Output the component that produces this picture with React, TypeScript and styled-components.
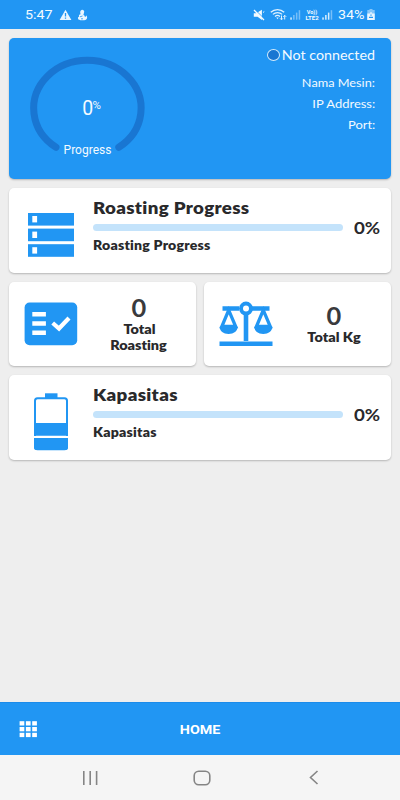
import React from "react";
import styled, { createGlobalStyle } from "styled-components";

const BLUE = "#2196f3";
const INK = "#29292b";

const GlobalStyle = createGlobalStyle`
  *, *::before, *::after { box-sizing: border-box; }
  body { margin: 0; background: #eeeeee; font-family: Lato, "Liberation Sans", sans-serif; }
  svg { display: block; flex: none; }
`;

const Screen = styled.div`
  width: 100%;
  height: 100vh;
  min-height: 800px;
  display: flex;
  flex-direction: column;
  background: #eeeeee;
  overflow: hidden;
`;

const StatusBar = styled.header`
  height: 29px;
  flex: none;
  display: flex;
  justify-content: space-between;
  padding-left: 25px;
  padding-right: 25px;
  background: ${BLUE};
`;

const StatusGroup = styled.div`
  display: flex;
  align-items: center;
  height: 29px;
`;

const Label = styled.span<{
  $size: number;
  $line: number;
  $stretch?: number;
  $weight?: number;
  $color?: string;
  $origin?: "left" | "center" | "right";
  $family?: string;
  $spacing?: number;
}>`
  display: block;
  margin: 0;
  white-space: nowrap;
  font-family: ${(p) => p.$family ?? "Lato"}, "Liberation Sans", sans-serif;
  font-size: ${(p) => p.$size}px;
  line-height: ${(p) => p.$line}px;
  font-weight: ${(p) => p.$weight ?? 400};
  font-variant-ligatures: none;
  letter-spacing: ${(p) => p.$spacing ?? 0}px;
  color: ${(p) => p.$color ?? "#f3faff"};
  transform: scaleX(${(p) => p.$stretch ?? 1});
  transform-origin: ${(p) => p.$origin ?? "left"} center;
`;

const Clock = styled(Label)`
  width: 34px;
`;

const BatteryText = styled(Label)`
  width: 28px;
  margin-left: 5px;
`;

const Content = styled.main`
  flex: 1;
  display: flex;
  flex-direction: column;
  gap: 9px;
  padding: 9px 9px 0;
`;

const Card = styled.section`
  background: #ffffff;
  border-radius: 5px;
  box-shadow: 0 1px 2px rgba(0, 0, 0, 0.24);
`;

const HeroCard = styled(Card)`
  height: 141px;
  flex: none;
  display: flex;
  justify-content: space-between;
  background: ${BLUE};
  padding: 7px 16px 0 17px;
`;

const Gauge = styled.div`
  width: 123px;
  height: 120px;
  display: grid;
  justify-items: center;
  align-items: start;
  > * { grid-area: 1 / 1; }
`;

const GaugeValue = styled.div`
  display: flex;
  align-items: flex-start;
  padding-top: 51px;
  padding-left: 8px;
`;

const GaugeCaption = styled(Label)`
  margin-top: 97px;
`;

const Machine = styled.div`
  display: flex;
  flex-direction: column;
  align-items: flex-end;
`;

const Connection = styled.div`
  display: flex;
  align-items: center;
  justify-content: flex-end;
  height: 20px;
  margin-bottom: 6.5px;
`;

const ConnectionText = styled(Label)`
  width: 92px;
  text-align: right;
`;

const StatusDot = styled.i`
  width: 13px;
  height: 12px;
  margin-right: 3px;
  border: 1.4px solid #d3ebfc;
  border-radius: 50%;
  background: #1976d2;
`;

const MeterCard = styled(Card)`
  height: 84.5px;
  flex: none;
  display: flex;
`;

const MeterIcon = styled.div`
  width: 84px;
  display: flex;
  justify-content: center;
`;

const MeterBody = styled.div`
  width: 250px;
  padding-top: 9px;
`;

const Track = styled.div`
  height: 6.5px;
  margin: 5px 0 6px;
  border-radius: 3.5px;
  background: #c4e3fb;
`;

const MeterPercent = styled(Label)`
  margin: 30px 0 0 11px;
`;

const TileRow = styled.div`
  display: grid;
  grid-template-columns: 1fr 1fr;
  gap: 8px;
  flex: none;
`;

const TileCard = styled(Card)`
  height: 84.5px;
  display: flex;
  align-items: center;
  padding-left: 15px;
`;

const TileText = styled.div`
  flex: 1;
  display: flex;
  flex-direction: column;
  align-items: center;
  padding-left: 4px;
`;

const TabBar = styled.footer`
  height: 53px;
  flex: none;
  display: grid;
  grid-template-columns: 1fr auto 1fr;
  align-items: center;
  padding: 0 19px;
  background: ${BLUE};
  border-top: 1px solid #1b8bea;
`;

const SystemNav = styled.nav`
  height: 45px;
  flex: none;
  display: grid;
  grid-template-columns: 111px 18px 97px 11px;
  align-items: center;
  padding-left: 82px;
  background: #f5f5f5;
`;

const WarningIcon = () => (
  <svg width="13" height="12" viewBox="0 0 13 12">
    <path d="M6.5 .8 12.4 11H.6z" fill="#eaf6ff" />
    <path d="M6.5 4v3.6M6.5 8.5v1.3" stroke={BLUE} strokeWidth="1.3" />
  </svg>
);

const FlameIcon = () => (
  <svg width="12" height="12" viewBox="0 0 12 12">
    <path
      d="M5 .8c1.8.2 2.7 1.3 2 3L6.4 6c1 .3 1.5 1.2 1.5 2 .8 0 1.2-.6 1.2-1.4 1.2.7 1.8 3.6-.7 4.3-2 .7-5.2.4-7-.5-.9-1.6-.4-2.5.9-2.9-.9-1.2 0-2.2 1.3-2.3C2.9 3.4 3 1.3 5 .8z"
      fill="#eaf6ff"
    />
    <path d="M3 7.8 5.5 7M4 9.8h2" stroke={BLUE} strokeWidth=".8" />
  </svg>
);

const MuteIcon = () => (
  <svg width="12" height="12" viewBox="0 0 12 12" fill="#f3faff">
    <path d="M.8 4.2h2.4L8.9.8V11L4.6 7.8H.8z" />
    <path d="M1.8.4 11.5 10.1" stroke={BLUE} strokeWidth="1" />
    <path d="M1 1 11 11" stroke="#f3faff" strokeWidth="1.3" />
    <path d="M10 3.5 11.3 2.5" stroke="#f3faff" />
  </svg>
);

const WifiIcon = () => (
  <svg width="17" height="13" viewBox="0 0 17 13" fill="none" stroke="#e2f2fe" strokeWidth="1.3">
    <path d="M.8 4.3C4.5.7 10.500.7 14.200 4.300M2.900 6.400c2.600-2.500 6.600-2.500 9.200 0M5 8.500c1.500-1.300 3.500-1.300 5 0" />
    <path d="M6.300 9.500h2.400L7.500 11.200z" fill="#e2f2fe" stroke="none" />
    <path d="M11.500 7.500v4M10 10.300l1.500 1.500 1.500-1.500M14.700 11.500v-4M13.300 8.800l1.400-1.500 1.500 1.500" strokeWidth="1" />
  </svg>
);

const SignalIcon = ({ level }: { level: number }) => (
  <svg width="11" height="10" viewBox="0 0 11 10" fill="#e2f2fe">
    {[0, 1, 2, 3].map((i) => (
      <rect
        key={i}
        x={0.3 + i * 2.8}
        y={7.4 - i * 2.4}
        width="1.5"
        height={2.3 + i * 2.4}
        opacity={i < level ? 0.95 : 0.45}
      />
    ))}
  </svg>
);

const NetworkTag = styled.div`
  width: 16px;
  margin: 0 2px 0 3px;
  display: flex;
  flex-direction: column;
  align-items: center;
`;

const BatteryIcon = () => (
  <svg width="8" height="11" viewBox="0 0 8 11">
    <path d="M2.5 0h3v1h2.2v10H.3V1h2.2z" fill="#eaf6ff" opacity=".5" />
    <path d="M.3 4.5h7.4V11H.3z" fill="#eaf6ff" />
    <path d="M4 3v2.5" stroke="#eaf6ff" strokeWidth="1.2" />
    <path d="M4 5.5v1.3M2 8.300h4" stroke={BLUE} strokeWidth="1.2" />
  </svg>
);

const Space = styled.i<{ $w: number }>`
  width: ${(p) => p.$w}px;
`;

const StorageIcon = () => (
  <svg width="46" height="85" viewBox="0 0 46 85">
    {[25, 40.6, 56.2].map((y) => (
      <g key={y}>
        <rect x="0" y={y} width="46" height="12.6" fill={BLUE} />
        <rect x="4.3" y={y + 3} width="4.8" height="6.4" fill="#fff" />
      </g>
    ))}
  </svg>
);

const BatteryLevelIcon = () => (
  <svg width="34" height="85" viewBox="0 0 34 85">
    <path d="M11 18.3h12.5V23H11z" fill={BLUE} />
    <rect x="1" y="23.3" width="32" height="51" rx="2.5" fill="#fff" stroke={BLUE} strokeWidth="2" />
    <path d="M0 48h34v12.8H0z" fill={BLUE} />
    <path d="M0 63h34v9.5q0 2.500-3 2.500H3q-3 0-3-2.500z" fill={BLUE} />
    <path d="M0 60.9h34V63H0z" fill="#fff" />
  </svg>
);

const ChecklistIcon = () => (
  <svg width="54" height="44" viewBox="0 0 54 44">
    <rect x=".6" y=".6" width="52.6" height="42.7" rx="5" fill={BLUE} />
    <path d="M8.3 10h13.6v4.500H8.300zM8.300 19.300h13.600v4.500H8.300zM8.300 28.500h13.600V33H8.300z" fill="#fff" />
    <path d="M28.700 21 35 26.500 45 16" fill="none" stroke="#fff" strokeWidth="4.2" />
  </svg>
);

const ScalesIcon = () => (
  <svg width="54" height="46" viewBox="0 0 54 46" fill="none" stroke={BLUE}>
    <path d="M3.5 7.5H20M33 7.500h17.500M27 13v27M.5 42.800h53" strokeWidth="4.6" />
    <circle cx="27" cy="7.6" r="5" strokeWidth="4" />
    <path d="M9.700 9.200 2.800 25.500h13.900z" strokeWidth="3.3" />
    <path d="M44.300 9.200 37.400 25.500h13.900z" strokeWidth="3.3" />
    <path d="M.7 25.700h17.900c0 4.300-3.800 7.200-9 7.200S.7 30 .7 25.700zM35.400 25.700h17.900c0 4.300-3.800 7.200-9 7.200s-8.900-2.900-8.900-7.200z" fill={BLUE} stroke="none" />
  </svg>
);

const GridIcon = () => (
  <svg width="19" height="17" viewBox="0 0 19 17" fill="#fff">
    {[0, 1, 2].map((r) =>
      [0, 1, 2].map((c) => (
        <rect key={`${r}${c}`} x={0.6 + c * 6.3} y={0.2 + r * 5.8} width="4.7" height="4.3" />
      ))
    )}
  </svg>
);

function Meter({ title, icon }: { title: string; icon: React.ReactNode }) {
  return (
    <MeterCard>
      <MeterIcon>{icon}</MeterIcon>
      <MeterBody>
        <Label as="h2" $size={17} $line={22} $weight={800} $color={INK} $stretch={1.1} $spacing={0.3}>
          {title}
        </Label>
        <Track />
        <Label $size={13} $line={16} $weight={800} $color={INK} $stretch={1.085} $spacing={0.2}>
          {title}
        </Label>
      </MeterBody>
      <MeterPercent $size={17} $line={20} $weight={700} $color={INK} $stretch={1.1}>
        0%
      </MeterPercent>
    </MeterCard>
  );
}

function Tile({ lines, icon }: { lines: string[]; icon: React.ReactNode }) {
  return (
    <TileCard>
      {icon}
      <TileText>
        <Label $size={24} $line={26} $weight={700} $color="#3a3a3c" $stretch={1.06} $origin="center">
          0
        </Label>
        {lines.map((line) => (
          <Label key={line} $size={13} $line={16} $weight={800} $color={INK} $stretch={1.11} $origin="center">
            {line}
          </Label>
        ))}
      </TileText>
    </TileCard>
  );
}

export default function App() {
  return (
    <Screen>
      <GlobalStyle />
      <StatusBar>
        <StatusGroup>
          <Clock $size={13.5} $line={29} $stretch={1.06} $family="Roboto">5:47</Clock>
          <WarningIcon />
          <Space $w={5} />
          <FlameIcon />
        </StatusGroup>
        <StatusGroup>
          <MuteIcon />
          <Space $w={5} />
          <WifiIcon />
          <Space $w={3} />
          <SignalIcon level={1} />
          <NetworkTag>
            <Label $size={5.5} $line={6} $weight={700} $family="Roboto">Vo))</Label>
            <Label $size={5.5} $line={6} $weight={700} $stretch={1.1} $origin="center" $family="Roboto">LTE2</Label>
          </NetworkTag>
          <SignalIcon level={3} />
          <BatteryText $size={13.5} $line={29} $stretch={1.06} $family="Roboto">34%</BatteryText>
          <Space $w={1} />
          <BatteryIcon />
        </StatusGroup>
      </StatusBar>

      <Content>
        <HeroCard>
          <Gauge>
            <svg width="123" height="120" viewBox="0 0 123 120">
              <path
                d="M30 102.3A53.7 48 0 1 1 92.8 102.3"
                fill="none"
                stroke="#1976d2"
                strokeWidth="7"
                strokeLinecap="round"
              />
            </svg>
            <GaugeValue>
              <Label $size={19.5} $line={25} $family="Roboto" $spacing={-0.7}>0</Label>
              <Label $size={11.5} $line={19} $family="Roboto">%</Label>
            </GaugeValue>
            <GaugeCaption $size={12} $line={16} $origin="center" $family="Roboto">
              Progress
            </GaugeCaption>
          </Gauge>
          <Machine>
            <Connection>
              <StatusDot />
              <ConnectionText $size={13} $line={20} $stretch={1.1} $origin="right">Not connected</ConnectionText>
            </Connection>
            <Label $size={12} $line={21} $stretch={1.06} $origin="right">Nama Mesin:</Label>
            <Label $size={12} $line={21} $stretch={1.08} $origin="right">IP Address:</Label>
            <Label $size={12} $line={21} $stretch={1.08} $origin="right">Port:</Label>
          </Machine>
        </HeroCard>

        <Meter title="Roasting Progress" icon={<StorageIcon />} />

        <TileRow>
          <Tile lines={["Total", "Roasting"]} icon={<ChecklistIcon />} />
          <Tile lines={["Total Kg"]} icon={<ScalesIcon />} />
        </TileRow>

        <Meter title="Kapasitas" icon={<BatteryLevelIcon />} />
      </Content>

      <TabBar>
        <GridIcon />
        <Label $size={13.5} $line={22} $weight={700} $color="#fff" $stretch={1.06} $family="Roboto" $origin="center">HOME</Label>
      </TabBar>

      <SystemNav>
        <svg width="16" height="14" viewBox="0 0 16 14" stroke="#858585" strokeWidth="1.6">
          <path d="M1.800 0v14M8.200 0v14M14.600 0v14" />
        </svg>
        <svg width="18" height="16" viewBox="0 0 18 16" fill="none" stroke="#858585" strokeWidth="1.6">
          <rect x="1.2" y="1.2" width="15.6" height="13.6" rx="4.5" />
        </svg>
        <span />
        <svg width="11" height="15" viewBox="0 0 11 15" fill="none" stroke="#858585" strokeWidth="1.6">
          <path d="M9.500 1 2.500 7.500l7 6.500" />
        </svg>
      </SystemNav>
    </Screen>
  );
}
